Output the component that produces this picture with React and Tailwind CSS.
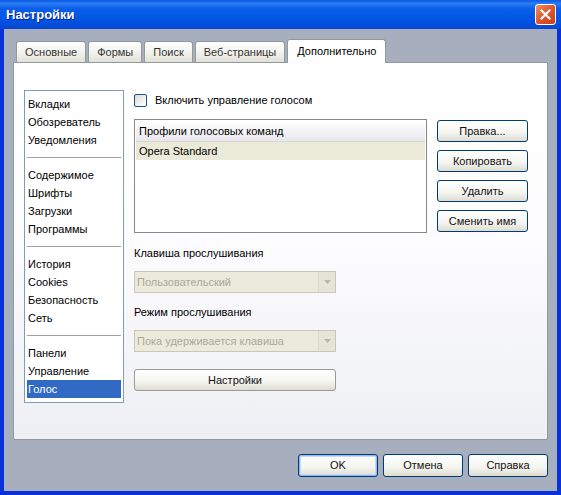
import React from 'react';

const tabs = ['Основные', 'Формы', 'Поиск', 'Веб-страницы'];

const groups = [
  ['Вкладки', 'Обозреватель', 'Уведомления'],
  ['Содержимое', 'Шрифты', 'Загрузки', 'Программы'],
  ['История', 'Cookies', 'Безопасность', 'Сеть'],
  ['Панели', 'Управление', 'Голос'],
];

function XpButton({ children, className = '', focused = false }) {
  return (
    <div
      role="button"
      className={`flex items-center justify-center rounded-[3px] border border-[#003c74] bg-[linear-gradient(#ffffff,#f4f4f0_60%,#dedcd0)] font-normal text-[#111] ${focused ? 'shadow-[inset_0_0_0_1px_#97b8f0,inset_0_0_0_2px_#c4d9f8]' : ''} ${className}`}
    >
      {children}
    </div>
  );
}

function DisabledSelect({ value }) {
  return (
    <div className="flex h-[22px] w-[202px] items-center border border-[#c9c7ba] bg-[#ebeadb]">
      <span className="flex-1 truncate pl-[2px] text-[#aca899]">{value}</span>
      <span className="flex h-full w-[17px] items-center justify-center border-l border-[#dcdacc] bg-[#e6e4d6]">
        <svg width="7" height="4" viewBox="0 0 7 4">
          <path d="M0 0h7L3.5 4z" fill="#b8b6a8" />
        </svg>
      </span>
    </div>
  );
}

export default function App() {
  return (
    <div className="flex h-[495px] w-[561px] flex-col bg-[#0831d9] font-['Liberation_Sans',Arial,sans-serif] text-[11px] text-black">
      {/* Заголовок окна */}
      <div className="flex h-[29px] shrink-0 items-center justify-between bg-[linear-gradient(#0a5ae6,#2a7bf5_12%,#0a5fe8_30%,#0054e3_70%,#0a45d0)] pl-[6px] pr-[5px]">
        <span className="text-[13px] font-bold text-white [text-shadow:1px_1px_0_#0a1e8c]">Настройки</span>
        <span className="flex h-[21px] w-[21px] items-center justify-center rounded-[3px] border border-white bg-[linear-gradient(135deg,#f0905f,#e0542c_50%,#c8401a)]">
          <svg width="11" height="11" viewBox="0 0 11 11">
            <path d="M1.5 1.5l8 8M9.5 1.5l-8 8" stroke="white" strokeWidth="2.2" strokeLinecap="square" />
          </svg>
        </span>
      </div>

      {/* Тело окна */}
      <div className="flex flex-1 flex-col border-x-4 border-b-4 border-[#0831d9] bg-[#a7afbe] px-[9px] pt-[10px]">
        {/* Вкладки */}
        <div className="flex h-[23px] items-end gap-[2px] pl-[3px]">
          {tabs.map(t => (
            <div
              key={t}
              className="flex h-[21px] items-center rounded-t-[3px] border border-b-0 border-[#919b9c] bg-[linear-gradient(#ffffff,#f0f0ea_60%,#e0e0d8)] px-[8px] text-[#333]"
            >
              {t}
            </div>
          ))}
          <div className="relative z-10 -mb-px flex h-[24px] items-center rounded-t-[3px] border border-b-0 border-[#919b9c] bg-white px-[9px]">
            Дополнительно
          </div>
        </div>

        {/* Панель */}
        <div className="flex h-[378px] rounded-b-[2px] border border-[#919b9c] bg-[linear-gradient(#ffffff,#fcfcfe_50%,#eeeff4)] pl-[10px] pt-[27px]">
          {/* Список разделов */}
          <div className="flex h-[313px] w-[100px] flex-col border border-[#7f9db9] bg-white p-[2px]">
            {groups.map((g, gi) => (
              <div key={gi} className={gi > 0 ? 'mt-[8px] border-t border-[#a0a0a0] pt-[8px]' : 'pt-[2px]'}>
                {g.map(item => (
                  <div
                    key={item}
                    className={`flex h-[18px] items-center px-[1px] ${item === 'Голос' ? 'bg-[#316ac5] text-white' : ''}`}
                  >
                    {item}
                  </div>
                ))}
              </div>
            ))}
          </div>

          {/* Правая часть */}
          <div className="ml-[10px] flex flex-col pt-[3px]">
            <label className="flex h-[14px] items-center gap-[8px]">
              <span className="h-[13px] w-[13px] rounded-[2px] border border-[#1c5180] bg-[linear-gradient(135deg,#dcdcd7,#ffffff)]" />
              <span>Включить управление голосом</span>
            </label>

            <div className="mt-[12px] flex">
              <div className="h-[114px] w-[293px] border border-[#828790] bg-white p-[1px]">
                <div className="flex h-[21px] items-center border-b border-[#d5d5d5] bg-[linear-gradient(#ffffff,#f3f3f6_50%,#e8e8ec)] pl-[3px]">
                  Профили голосовых команд
                </div>
                <div className="flex h-[18px] items-center bg-[#ebe9d7] pl-[3px]">Opera Standard</div>
              </div>
              <div className="ml-[10px] flex flex-col gap-[8px] pt-[1px]">
                <XpButton className="h-[22px] w-[91px]">Правка...</XpButton>
                <XpButton className="h-[22px] w-[91px]">Копировать</XpButton>
                <XpButton className="h-[22px] w-[91px]">Удалить</XpButton>
                <XpButton className="h-[22px] w-[91px]">Сменить имя</XpButton>
              </div>
            </div>

            <div className="mt-[12px] flex h-[16px] items-center">Клавиша прослушивания</div>
            <div className="mt-[10px]">
              <DisabledSelect value="Пользовательский" />
            </div>
            <div className="mt-[11px] flex h-[16px] items-center">Режим прослушивания</div>
            <div className="mt-[10px]">
              <DisabledSelect value="Пока удерживается клавиша" />
            </div>
            <XpButton className="mt-[17px] h-[22px] w-[202px] border-[#9a9a9a]">Настройки</XpButton>
          </div>
        </div>

        {/* Кнопки диалога */}
        <div className="mt-[14px] flex justify-end gap-[5px]">
          <XpButton focused className="h-[23px] w-[80px]">OK</XpButton>
          <XpButton className="h-[23px] w-[80px]">Отмена</XpButton>
          <XpButton className="h-[23px] w-[80px]">Справка</XpButton>
        </div>
      </div>
    </div>
  );
}
